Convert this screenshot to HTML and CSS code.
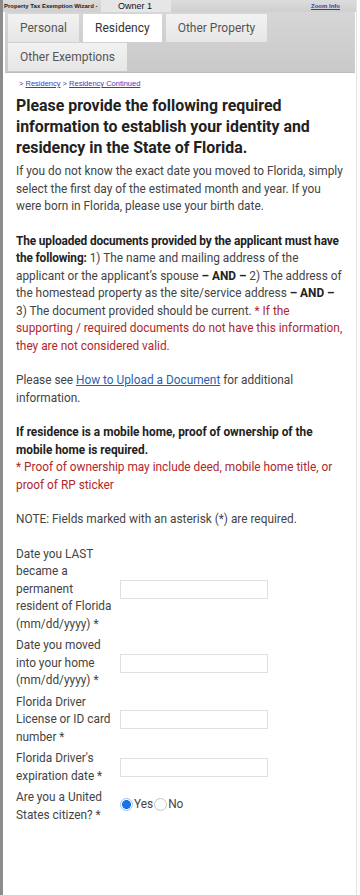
FILE: index.html
```html
<!DOCTYPE html>
<html>
<head>
<meta charset="utf-8">
<link rel="stylesheet" href="styles.css">
</head>
<body>
<div class="frame">
  <div class="topbar">
    <span class="wiz">Property Tax Exemption Wizard -</span>
    <span class="owner">Owner 1</span>
    <span class="spacer"></span>
    <a class="zoom" href="#">Zoom Info</a>
  </div>
  <div class="tabs">
    <div class="tab">Personal</div>
    <div class="tab active">Residency</div>
    <div class="tab">Other Property</div>
    <div class="tab">Other Exemptions</div>
  </div>
  <div class="content">
    <div class="crumbs">&gt; <a href="#">Residency</a> &gt; <a href="#">Residency Continued</a></div>
    <h1>Please provide the following required information to establish your identity and residency in the State of Florida.</h1>
    <p>If you do not know the exact date you moved to Florida, simply select the first day of the estimated month and year. If you were born in Florida, please use your birth date.</p>
    <p><b class="tight">The uploaded documents provided by the applicant must have the following:</b> 1) The name and mailing address of the applicant or the applicant’s spouse <b>– AND –</b> 2) The address of the homestead property as the site/service address <b>– AND –</b> 3) The document provided should be current. <span class="red">* If the supporting / required documents do not have this information, they are not considered valid.</span></p>
    <p>Please see <a class="link" href="#">How to Upload a Document</a> for additional information.</p>
    <p><b>If residence is a mobile home, proof of ownership of the mobile home is required.</b><br><span class="red">* Proof of ownership may include deed, mobile home title, or proof of RP sticker</span></p>
    <p>NOTE: Fields marked with an asterisk (*) are required.</p>
    <div class="form">
      <label class="lbl">Date you LAST became a permanent resident of Florida (mm/dd/yyyy) *</label>
      <div class="field"><input class="inp" type="text"></div>
      <label class="lbl">Date you moved into your home (mm/dd/yyyy) *</label>
      <div class="field"><input class="inp" type="text"></div>
      <label class="lbl">Florida Driver License or ID card number *</label>
      <div class="field"><input class="inp" type="text"></div>
      <label class="lbl">Florida Driver's expiration date *</label>
      <div class="field"><input class="inp" type="text"></div>
      <label class="lbl">Are you a United States citizen? *</label>
      <div class="field radios">
        <input class="radio" type="radio" name="cit" checked><span>Yes</span><input class="radio" type="radio" name="cit"><span>No</span>
      </div>
    </div>
  </div>
</div>
</body>
</html>
```
FILE: styles.css
```css
html, body {
  margin: 0;
  padding: 0;
  background: #fff;
}
.frame {
  width: 353px;
  min-height: 895px;
  border-left: 3px solid #8c8c8c;
  border-right: 1px solid #e2e2e2;
  box-sizing: content-box;
}
.topbar {
  height: 12px;
  display: flex;
  align-items: center;
  background: linear-gradient(#dcdcdc, #cfcfcf);
  font-family: "Liberation Sans", Arial, sans-serif;
}
.wiz {
  font-size: 6px;
  font-weight: bold;
  color: #222;
  padding-left: 1px;
  width: 97px;
  white-space: nowrap;
}
.owner {
  height: 12px;
  line-height: 12px;
  width: 70px;
  background: #e6e6e6;
  font-size: 9px;
  color: #111;
  padding-left: 17px;
  box-sizing: border-box;
}
.spacer {
  flex: 1;
}
.zoom {
  font-size: 6px;
  font-weight: bold;
  color: #2a3fb5;
  margin-right: 16px;
}
.tabs {
  margin: 0 1px 0 2px;
  padding: 2px 3px 1px;
  display: flex;
  flex-wrap: wrap;
  column-gap: 4px;
  row-gap: 1px;
  background: linear-gradient(#d6d6d6, #c9c9c9);
  border-bottom: 1px solid #bdbdbd;
  font-family: Roboto, "Noto Sans", sans-serif;
}
.tab {
  height: 28px;
  line-height: 28px;
  padding: 0 12px;
  font-size: 12px;
  color: #555;
  background: linear-gradient(#f2f2f2, #e6e6e6);
}
.tab.active {
  background: #fff;
  color: #333;
}
.content {
  padding: 0 13px;
  font-family: Roboto, "Noto Sans", sans-serif;
  font-size: 11.85px;
  line-height: 17.5px;
  color: #444;
}
.crumbs {
  padding-top: 6px;
  font-family: "Liberation Sans", Arial, sans-serif;
  font-size: 7.5px;
  line-height: 10px;
  color: #444;
  padding-left: 3px;
}
.crumbs a {
  color: #3c3cc0;
}
h1 {
  margin: 6px 0 5px;
  font-size: 15.9px;
  line-height: 21px;
  font-weight: bold;
  color: #222;
}
p {
  margin: 0 0 17px;
}
b {
  color: #222;
}
.tight {
  letter-spacing: -0.12px;
}
.red {
  color: #b0282d;
}
.link {
  color: #2b5fb0;
}
.form {
  display: grid;
  grid-template-columns: 104px 148px;
  align-items: center;
  row-gap: 4px;
  margin-top: 0;
}
.lbl {
  padding-right: 4px;
}
.field {
  display: flex;
  align-items: center;
}
.inp {
  width: 148px;
  height: 19px;
  box-sizing: border-box;
  border: 1px solid #e0e0e0;
  margin: 0;
  padding: 0;
  background: #fff;
}
.radios {
  align-self: start;
  padding-top: 7px;
}
.radio {
  appearance: none;
  -webkit-appearance: none;
  width: 13px;
  height: 13px;
  margin: 0 1px 0 0;
  border-radius: 50%;
  border: 1px solid #c4c4c4;
  background: #fff;
  box-sizing: border-box;
}
.radio:checked {
  border: 1px solid #9cc0f5;
  background: radial-gradient(circle, #1a73e8 0 4.2px, #fff 4.7px);
}
.radios span:first-of-type {
  margin-right: 1px;
}
```
